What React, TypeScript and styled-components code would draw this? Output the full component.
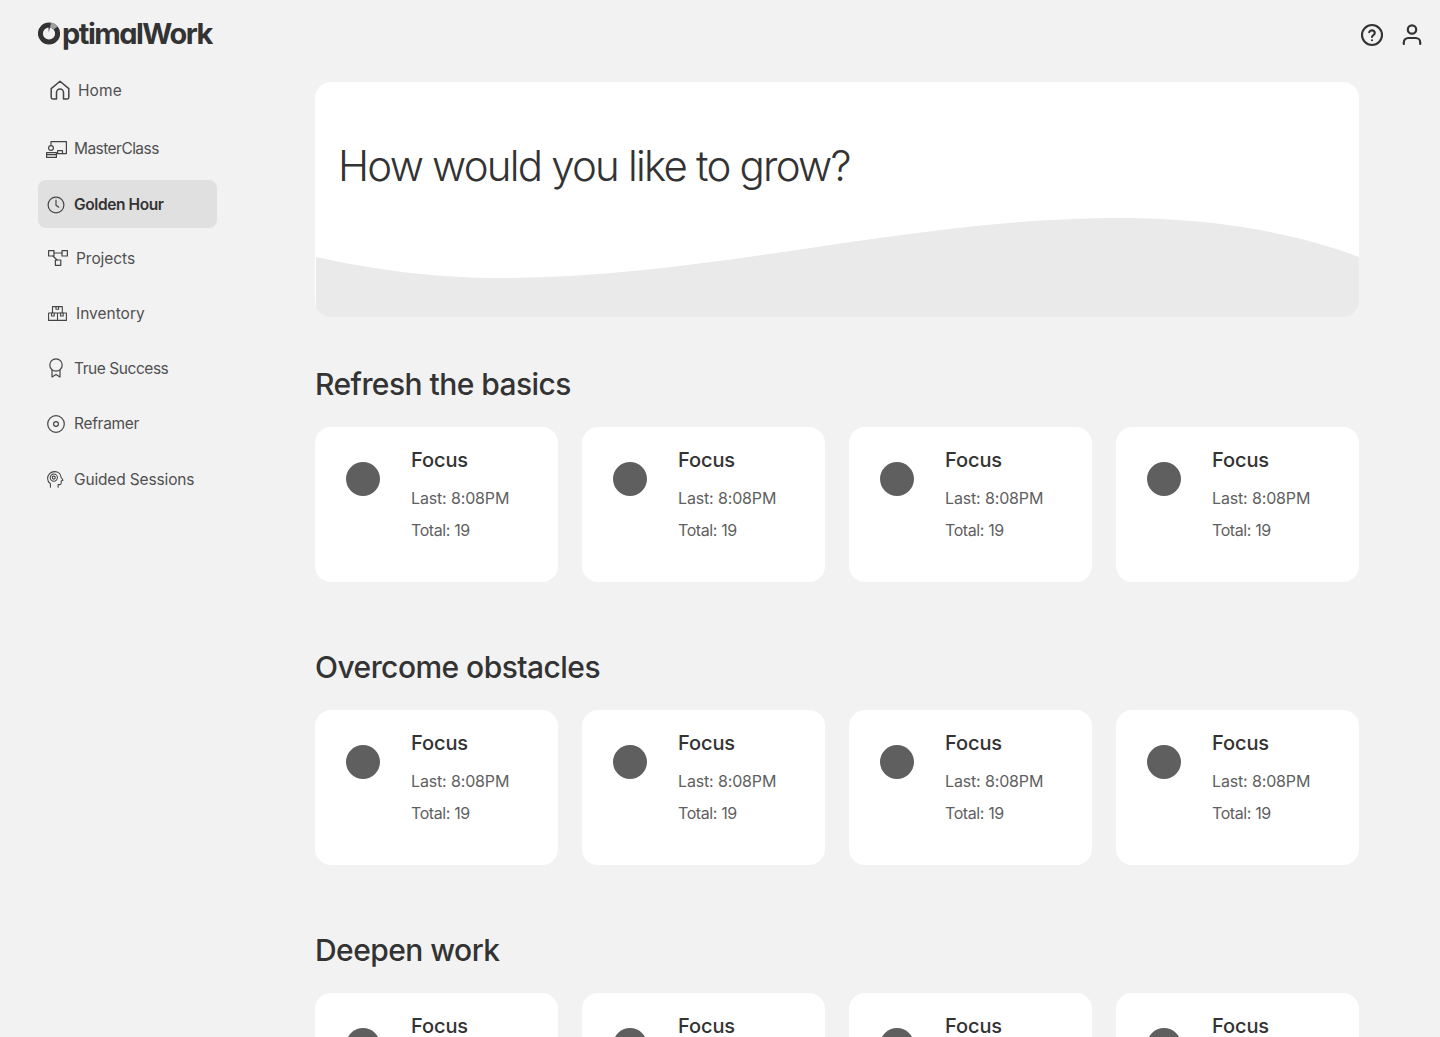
import React from "react";
import styled, { createGlobalStyle } from "styled-components";

const Global = createGlobalStyle`
  html, body { margin: 0; padding: 0; background: #f2f2f2; }
  body { font-family: "Inter", "Liberation Sans", sans-serif; color: #333; overflow: hidden; }
  * { box-sizing: border-box; }
`;

const Page = styled.div`
  width: 1440px;
  height: 1037px;
  overflow: hidden;
  background: #f2f2f2;
`;

const Header = styled.header`
  height: 66px;
  display: flex;
  align-items: center;
  padding: 4px 16px 0 38px;
`;

const Logo = styled.div`
  display: flex;
  align-items: center;
  gap: 1px;
  flex: 1;
  height: 34px;
`;

const LogoMarkSlot = styled.span`
  display: flex;
  margin-bottom: 4px;
`;

const LogoText = styled.span`
  font-family: "Inter", sans-serif;
  font-size: 29px;
  font-weight: 700;
  letter-spacing: -1.5px;
  font-feature-settings: "cv11" 1;
  color: #333;
  line-height: 34px;
  margin-bottom: 2px;
`;

const HeaderActions = styled.div`
  display: flex;
  align-items: center;
  gap: 16px;
`;

const Body = styled.div`
  display: flex;
  align-items: flex-start;
  padding-left: 38px;
`;

const Sidebar = styled.nav`
  width: 179px;
  display: flex;
  flex-direction: column;
`;

const NavItem = styled.a<{ $inset: number; $gap: number; $top: number; $tracking: number; $active?: boolean }>`
  height: 48px;
  margin-top: ${(p) => p.$top}px;
  padding-left: ${(p) => p.$inset}px;
  display: flex;
  align-items: center;
  gap: ${(p) => p.$gap}px;
  border-radius: 8px;
  font-size: 15.5px;
  letter-spacing: ${(p) => p.$tracking}px;
  font-weight: ${(p) => (p.$active ? 600 : 400)};
  color: ${(p) => (p.$active ? "#333" : "#505050")};
  background: ${(p) => (p.$active ? "#e0e0e0" : "transparent")};
`;

const NavIcon = styled.span<{ $drop: number }>`
  display: flex;
  flex: none;
  margin-top: ${(p) => p.$drop}px;
`;

const Main = styled.main`
  width: 1044px;
  margin-left: 98px;
  padding-top: 16px;
`;

const Hero = styled.div`
  height: 235px;
  background: #fff;
  border-radius: 16px;
  overflow: hidden;
  display: flex;
  flex-direction: column;
`;

const HeroTitle = styled.h1`
  margin: 0;
  height: 136px;
  padding: 58px 0 0 23px;
  font-size: 42px;
  line-height: 52px;
  font-weight: 300;
  letter-spacing: -1.8px;
  color: #333;
`;

const Wave = styled.svg`
  display: block;
  width: 1044px;
  height: 99px;
`;

const Section = styled.section`
  padding-top: 47px;
  height: 283px;
`;

const SectionTitle = styled.h2`
  margin: 0 0 23px;
  font-size: 30px;
  line-height: 40px;
  font-weight: 500;
  letter-spacing: -0.55px;
  color: #333;
`;

const CardGrid = styled.div`
  display: grid;
  grid-template-columns: repeat(4, 243px);
  gap: 24px;
`;

const Card = styled.article`
  height: 155px;
  background: #fff;
  border-radius: 16px;
  display: flex;
  align-items: flex-start;
  padding: 18px 0 0 31px;
`;

const Dot = styled.div`
  width: 34px;
  height: 34px;
  margin-top: 17px;
  border-radius: 50%;
  background: #5f5f5f;
  flex: none;
`;

const CardText = styled.div`
  margin-left: 31px;
  display: flex;
  flex-direction: column;
`;

const CardTitle = styled.div`
  font-size: 20px;
  line-height: 30px;
  font-weight: 500;
  letter-spacing: -0.1px;
  color: #333;
  margin-bottom: 7px;
`;

const CardLine = styled.div<{ $tracking: number }>`
  font-size: 16px;
  line-height: 32px;
  letter-spacing: ${(p) => p.$tracking}px;
  color: #5f5f5f;
`;

const stroke = { fill: "none", stroke: "#444", strokeWidth: 1.2, strokeLinecap: "round", strokeLinejoin: "round" } as const;

const HomeIcon = () => (
  <svg width="20" height="20" viewBox="0 0 20 20" {...stroke} strokeWidth={1.5}>
    <path d="M1.2 8.6 10 1.2l8.8 7.4v9a1.4 1.4 0 0 1-1.4 1.4h-3.9v-6.5a3.5 3.5 0 0 0-7 0V19H2.6a1.4 1.4 0 0 1-1.4-1.4z" />
  </svg>
);
const MasterClassIcon = () => (
  <svg width="21" height="17" viewBox="0 0 21 17" {...stroke}>
    <path d="M5 3.6V.6h15.4v12H10.6" />
    <path d="M11.6 12.6V9.6h4.9v3" />
    <circle cx="5" cy="7" r="2.4" />
    <path d="M.6 11.6h9.8v4.8H.6zM.6 13.6h9.8" />
  </svg>
);
const ClockIcon = () => (
  <svg width="18" height="18" viewBox="0 0 18 18" {...stroke}>
    <circle cx="9" cy="9" r="7.9" />
    <path d="M9 4v5.2l2.8 2" />
  </svg>
);
const ProjectsIcon = () => (
  <svg width="20" height="16" viewBox="0 0 20 16" {...stroke}>
    <rect x=".6" y=".6" width="5.4" height="5.4" />
    <rect x="14" y=".6" width="5.4" height="5.4" />
    <rect x="7.4" y="10" width="5.4" height="5.4" />
    <path d="M6 3h8M5 6l4 4" />
  </svg>
);
const InventoryIcon = () => (
  <svg width="19" height="15" viewBox="0 0 19 15" {...stroke} strokeWidth={1.1}>
    <path d="M.6 7h8.9v7.4H.6zM9.5 7h8.9v7.4H9.5zM4.5 7V.6h9.8V7" />
    <path d="M3.6 7v3h2.6V7M12.6 7v3h2.6V7M8 .6v2.6h2.6V.6" />
  </svg>
);
const RibbonIcon = () => (
  <svg width="14" height="20" viewBox="0 0 14 20" {...stroke}>
    <circle cx="7" cy="7" r="6.2" />
    <path d="M3 12v7l4-2.6 4 2.6v-7" />
  </svg>
);
const DiscIcon = () => (
  <svg width="18" height="18" viewBox="0 0 18 18" {...stroke}>
    <circle cx="9" cy="9" r="8.3" />
    <circle cx="9" cy="9" r="2.4" />
  </svg>
);
const HeadIcon = () => (
  <svg width="17" height="17" viewBox="0 0 17 17" {...stroke} strokeWidth={1.05}>
    <path d="M3.4 16.2v-3.4C1.6 11.5.6 9.6.6 7.4.6 3.5 3.6.6 7.6.6c3.6 0 6.2 2.4 6.4 5.6l2 3.1-1.8.8v1.8c0 1-.7 1.7-1.7 1.7h-1.4v2.6" />
    <circle cx="6.8" cy="6.6" r="3.6" />
    <circle cx="6.8" cy="6.6" r="1.5" />
  </svg>
);
const HelpIcon = () => (
  <svg width="24" height="24" viewBox="0 0 24 24" fill="none" stroke="#333" strokeWidth="2.1" strokeLinecap="round" strokeLinejoin="round">
    <circle cx="12" cy="12" r="10" />
    <path d="M9.2 9.2a2.9 2.9 0 0 1 5.6.9c0 1.9-2.8 2.4-2.8 3.9" />
    <path d="M12 17.2h.01" />
  </svg>
);
const UserIcon = () => (
  <svg width="24" height="24" viewBox="0 0 24 24" fill="none" stroke="#333" strokeWidth="2.2" strokeLinecap="round">
    <circle cx="12" cy="6.5" r="4.2" />
    <path d="M3.8 21v-1.6a4.4 4.4 0 0 1 4.4-4.4h7.6a4.4 4.4 0 0 1 4.4 4.4V21" />
  </svg>
);
const LogoMark = () => (
  <svg width="23" height="23" viewBox="0 0 23 23">
    <circle cx="11" cy="11.5" r="8.6" fill="none" stroke="#333" strokeWidth="5" />
    <path d="M12.2 3A8.6 8.6 0 0 1 17.6 6" fill="none" stroke="#a0a0a0" strokeWidth="5" />
    <path d="M12.9 1.2 10.2 1.2 10.8 10.4z" fill="#333" />
  </svg>
);

type Nav = {
  label: string;
  inset: number;
  gap: number;
  top: number;
  tracking: number;
  drop: number;
  active?: boolean;
  icon: React.ReactNode;
};

const navItems: Nav[] = [
  { label: "Home", inset: 12, gap: 8, top: 0, tracking: 0.1, drop: 0, icon: <HomeIcon /> },
  { label: "MasterClass", inset: 8, gap: 7, top: 10, tracking: -0.55, drop: 2, icon: <MasterClassIcon /> },
  { label: "Golden Hour", inset: 9, gap: 9, top: 8, tracking: -0.4, drop: 2, active: true, icon: <ClockIcon /> },
  { label: "Projects", inset: 10, gap: 8, top: 6, tracking: -0.05, drop: 0, icon: <ProjectsIcon /> },
  { label: "Inventory", inset: 10, gap: 9, top: 7, tracking: 0, drop: 0, icon: <InventoryIcon /> },
  { label: "True Success", inset: 11, gap: 11, top: 7, tracking: -0.45, drop: 0, icon: <RibbonIcon /> },
  { label: "Reframer", inset: 9, gap: 9, top: 7, tracking: -0.3, drop: 2, icon: <DiscIcon /> },
  { label: "Guided Sessions", inset: 9, gap: 10, top: 8, tracking: -0.15, drop: 0, icon: <HeadIcon /> },
];

const sections = ["Refresh the basics", "Overcome obstacles", "Deepen work"];

export default function App() {
  return (
    <Page>
      <Global />
      <Header>
        <Logo>
          <LogoMarkSlot>
            <LogoMark />
          </LogoMarkSlot>
          <LogoText>ptimalWork</LogoText>
        </Logo>
        <HeaderActions>
          <HelpIcon />
          <UserIcon />
        </HeaderActions>
      </Header>
      <Body>
        <Sidebar>
          {navItems.map((n) => (
            <NavItem key={n.label} $inset={n.inset} $gap={n.gap} $top={n.top} $tracking={n.tracking} $active={n.active}>
              <NavIcon $drop={n.drop}>{n.icon}</NavIcon>
              {n.label}
            </NavItem>
          ))}
        </Sidebar>
        <Main>
          <Hero>
            <HeroTitle>How would you like to grow?</HeroTitle>
            <Wave viewBox="0 0 1044 99" preserveAspectRatio="none">
              <path
                d="M1 39C60 52 120 60 184 60C400 60 590 0 806 0C900 0 980 15 1044 39V99H1Z"
                fill="#eaeaea"
              />
            </Wave>
          </Hero>
          {sections.map((s) => (
            <Section key={s}>
              <SectionTitle>{s}</SectionTitle>
              <CardGrid>
                {[0, 1, 2, 3].map((i) => (
                  <Card key={i}>
                    <Dot />
                    <CardText>
                      <CardTitle>Focus</CardTitle>
                      <CardLine $tracking={-0.15}>Last: 8:08PM</CardLine>
                      <CardLine $tracking={-0.4}>Total: 19</CardLine>
                    </CardText>
                  </Card>
                ))}
              </CardGrid>
            </Section>
          ))}
        </Main>
      </Body>
    </Page>
  );
}
